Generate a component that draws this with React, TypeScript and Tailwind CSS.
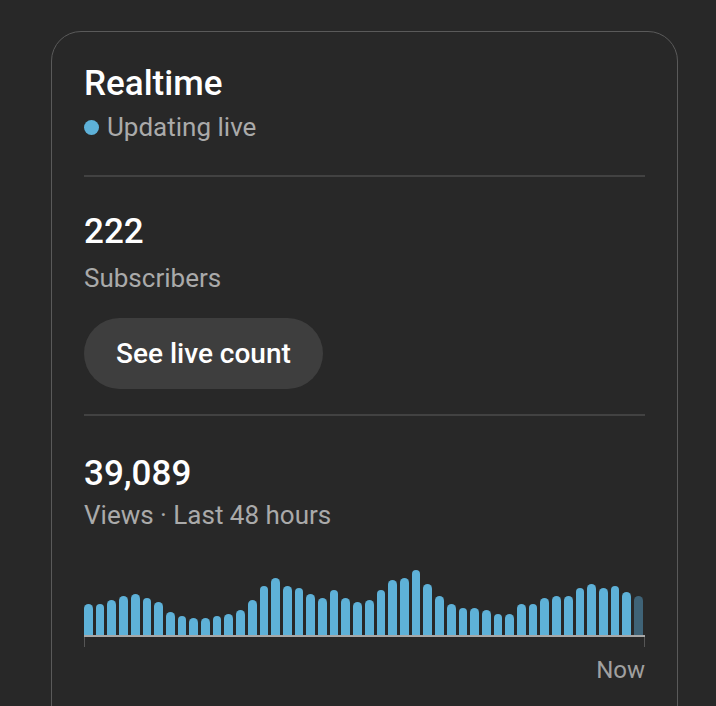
const views = [
  31, 31, 35, 39, 41, 37, 33, 23, 19, 17, 17, 19, 21, 25, 35, 49, 57, 49, 47, 41, 37, 45, 37, 33,
  35, 45, 55, 57, 65, 51, 39, 31, 27, 27, 25, 21, 21, 31, 31, 37, 39, 39, 47, 51, 47, 49, 43, 39,
];

export default function App() {
  return (
    <div className="h-[706px] overflow-hidden bg-[#282828] pl-[51px] pt-[31px] font-['Roboto',sans-serif]">
      <div className="h-[720px] w-[627px] rounded-[30px] border border-[#5a5a5a] px-8 pt-[30px]">
        {/* Header */}
        <h1 className="text-[35px] leading-[44px] font-medium text-white">Realtime</h1>
        <div className="mt-[5px] flex items-center gap-2 text-[26px] leading-[32px] text-[#aaaaaa]">
          <span className="h-[15px] w-[15px] rounded-full bg-[#5eb1d8]" />
          Updating live
        </div>

        <div className="mt-[32px] h-[2px] bg-[#424242]" />

        {/* Subscribers */}
        <div className="mt-[33px] text-[35px] leading-[44px] font-medium text-white">222</div>
        <div className="mt-[8px] text-[26px] leading-[32px] text-[#aaaaaa]">Subscribers</div>
        <button className="mt-[24px] h-[71px] rounded-full bg-[#3e3e3e] px-8 text-[28px] font-medium text-white">
          See live count
        </button>

        <div className="mt-[25px] h-[2px] bg-[#424242]" />

        {/* Views */}
        <div className="mt-[36px] text-[35px] leading-[44px] font-medium text-white">39,089</div>
        <div className="mt-[3px] text-[26px] leading-[32px] text-[#aaaaaa]">Views · Last 48 hours</div>

        <div className="mt-[39px] flex h-[65px] items-end gap-[3px] pr-[2px]">
          {views.map((v, i) => (
            <div
              key={i}
              className={
                i === views.length - 1
                  ? 'flex-1 rounded-t-full bg-[#3f6377]'
                  : 'flex-1 rounded-t-full bg-[#5eb1d8]'
              }
              style={{ height: v }}
            />
          ))}
        </div>
        <div className="h-[2px] bg-[#a8a8a8]" />
        <div className="h-[10px] border-x border-[#555555]" />
        <div className="mt-[8px] text-right text-[24px] leading-[30px] text-[#a0a0a0]">Now</div>
      </div>
    </div>
  );
}
